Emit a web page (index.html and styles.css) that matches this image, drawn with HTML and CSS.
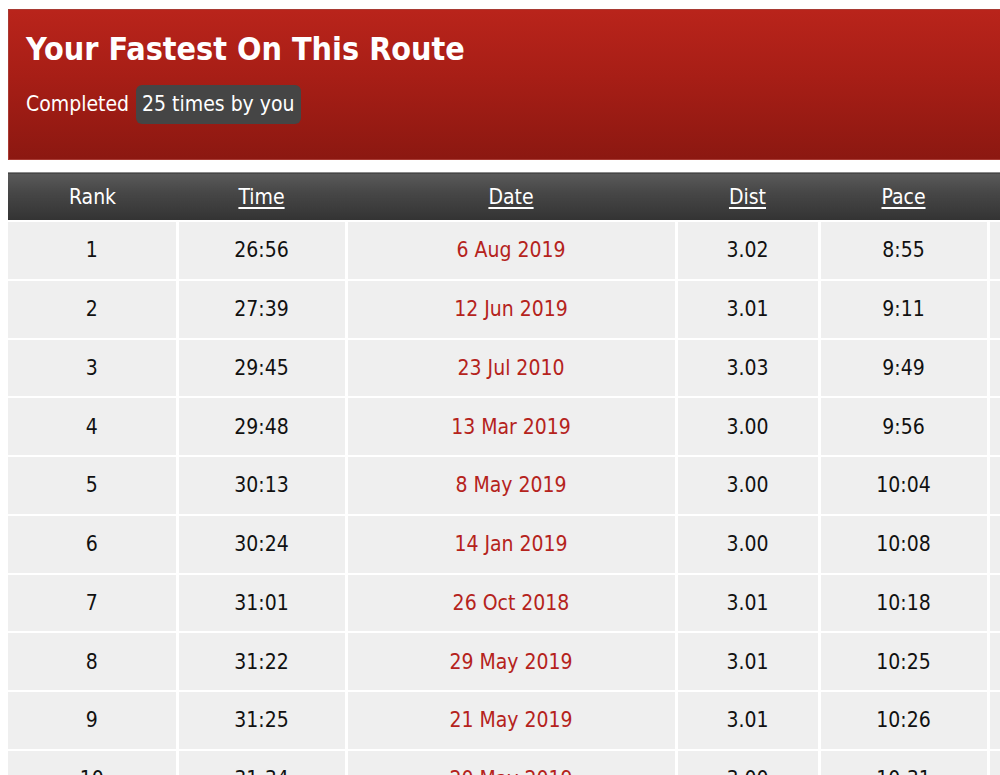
FILE: index.html
```html
<!DOCTYPE html>
<html>
<head>
<meta charset="utf-8">
<link rel="stylesheet" href="styles.css">
</head>
<body>
<div class="page">
  <div class="banner">
    <h1 class="title">Your Fastest On This Route</h1>
    <p class="summary">Completed <span class="badge">25 times by you</span></p>
  </div>
  <table class="results">
    <colgroup>
      <col class="c-rank"><col class="c-time"><col class="c-date"><col class="c-dist"><col class="c-pace"><col class="c-extra">
    </colgroup>
    <thead>
      <tr><th>Rank</th><th><a href="#">Time</a></th><th><a href="#">Date</a></th><th><a href="#">Dist</a></th><th><a href="#">Pace</a></th><th></th></tr>
    </thead>
    <tbody>
      <tr><td>1</td><td>26:56</td><td><a href="#">6 Aug 2019</a></td><td>3.02</td><td>8:55</td><td></td></tr>
      <tr><td>2</td><td>27:39</td><td><a href="#">12 Jun 2019</a></td><td>3.01</td><td>9:11</td><td></td></tr>
      <tr><td>3</td><td>29:45</td><td><a href="#">23 Jul 2010</a></td><td>3.03</td><td>9:49</td><td></td></tr>
      <tr><td>4</td><td>29:48</td><td><a href="#">13 Mar 2019</a></td><td>3.00</td><td>9:56</td><td></td></tr>
      <tr><td>5</td><td>30:13</td><td><a href="#">8 May 2019</a></td><td>3.00</td><td>10:04</td><td></td></tr>
      <tr><td>6</td><td>30:24</td><td><a href="#">14 Jan 2019</a></td><td>3.00</td><td>10:08</td><td></td></tr>
      <tr><td>7</td><td>31:01</td><td><a href="#">26 Oct 2018</a></td><td>3.01</td><td>10:18</td><td></td></tr>
      <tr><td>8</td><td>31:22</td><td><a href="#">29 May 2019</a></td><td>3.01</td><td>10:25</td><td></td></tr>
      <tr><td>9</td><td>31:25</td><td><a href="#">21 May 2019</a></td><td>3.01</td><td>10:26</td><td></td></tr>
      <tr><td>10</td><td>31:34</td><td><a href="#">20 May 2019</a></td><td>3.00</td><td>10:31</td><td></td></tr>
    </tbody>
  </table>
</div>
</body>
</html>
```

FILE: styles.css
```css
html, body {
  margin: 0;
  padding: 0;
  overflow: hidden;
  background: #fff;
}
body {
  font-family: "DejaVu Sans Condensed", "DejaVu Sans", sans-serif;
  color: #111;
}
.page {
  width: 992px;
  height: 766px;
  overflow: hidden;
  padding: 9px 0 0 8px;
}
.banner {
  width: 1150px;
  background: linear-gradient(to bottom, #b9241b 0%, #a71e16 45%, #8c1811 100%);
  border: 1px solid #a83a33;
  height: 151px;
  box-sizing: border-box;
  padding: 21px 17px 0;
  color: #fff;
}
.title {
  margin: 0;
  font-size: 32px;
  line-height: 36px;
  font-weight: bold;
}
.summary {
  margin: 17px 0 0;
  font-size: 21px;
  line-height: 40px;
  display: flex;
  align-items: center;
  gap: 7px;
}
.badge {
  background: #454545;
  border-radius: 6px;
  padding: 0 6px;
  line-height: 39px;
}
.results {
  margin-top: 12px;
  border-collapse: collapse;
  table-layout: fixed;
  width: 1150px;
  font-size: 21px;
  text-align: center;
}
.c-rank { width: 169px; }
.c-time { width: 169px; }
.c-date { width: 330px; }
.c-dist { width: 143px; }
.c-pace { width: 169px; }
.c-extra { width: 170px; }
.results th {
  height: 47px;
  padding: 0;
  font-weight: normal;
  color: #fff;
  background: linear-gradient(to bottom, #5a5a5a 0%, #474747 40%, #333 100%);
  border-top: 1px solid #8a8a8a;
}
.results th a {
  color: #fff;
  text-decoration: underline;
  text-underline-offset: 3px;
}
.results td {
  height: 56.75px;
  padding: 0;
  background: #efefef;
  border-top: 2px solid #fff;
  border-bottom: 2px solid #fff;
  border-right: 3px solid #fff;
}
.results td a {
  color: #b5231c;
  text-decoration: none;
}
```
